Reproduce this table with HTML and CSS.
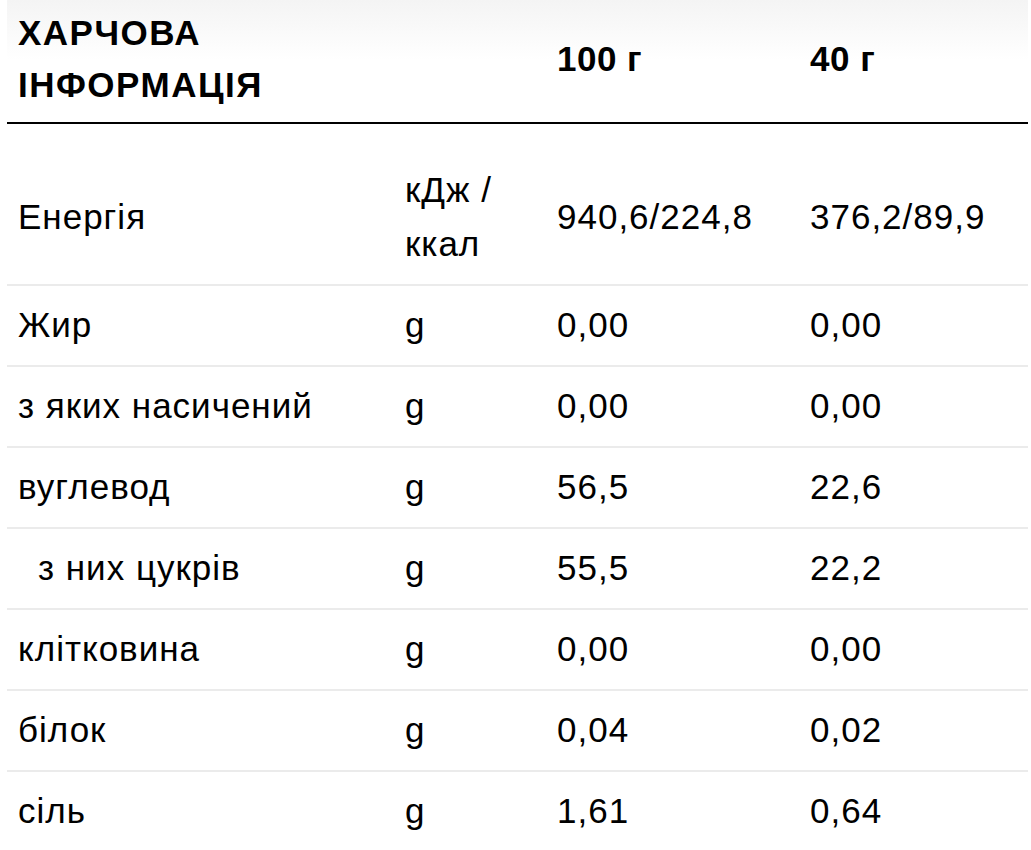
FILE: index.html
```html
<!DOCTYPE html>
<html lang="uk">
<head>
<meta charset="utf-8">
<title>Харчова інформація</title>
<link rel="stylesheet" href="styles.css">
</head>
<body>
<table class="nutrition">
  <colgroup>
    <col class="c-name">
    <col class="c-unit">
    <col class="c-100">
    <col class="c-40">
  </colgroup>
  <thead>
    <tr>
      <th>ХАРЧОВА<br>ІНФОРМАЦІЯ</th>
      <th></th>
      <th class="qty">100 г</th>
      <th class="qty">40 г</th>
    </tr>
  </thead>
  <tbody>
    <tr class="first">
      <td>Енергія</td>
      <td>кДж /<br>ккал</td>
      <td>940,6/224,8</td>
      <td>376,2/89,9</td>
    </tr>
    <tr><td>Жир</td><td>g</td><td>0,00</td><td>0,00</td></tr>
    <tr><td>з яких насичений</td><td>g</td><td>0,00</td><td>0,00</td></tr>
    <tr><td>вуглевод</td><td>g</td><td>56,5</td><td>22,6</td></tr>
    <tr><td class="sub">з них цукрів</td><td>g</td><td>55,5</td><td>22,2</td></tr>
    <tr><td>клітковина</td><td>g</td><td>0,00</td><td>0,00</td></tr>
    <tr><td>білок</td><td>g</td><td>0,04</td><td>0,02</td></tr>
    <tr><td>сіль</td><td>g</td><td>1,61</td><td>0,64</td></tr>
  </tbody>
</table>
</body>
</html>
```
FILE: styles.css
```css
html {
  background: #fff;
}
body {
  margin: 0 3px 0 7px;
  background: linear-gradient(#f4f4f4, #ffffff 60px) no-repeat;
  font-family: "Liberation Sans", Arial, sans-serif;
  color: #000;
}
.nutrition {
  width: 100%;
  border-collapse: collapse;
  font-size: 35px;
  letter-spacing: 1px;
}
.c-name { width: 387px; }
.c-unit { width: 152px; }
.c-100 { width: 253px; }
.c-40 { width: auto; }

.nutrition th {
  text-align: left;
  font-weight: bold;
  line-height: 52px;
  padding: 7px 11px 11px;
  vertical-align: middle;
  border-bottom: 2px solid #000;
  letter-spacing: 1.5px;
}
.nutrition th.qty {
  letter-spacing: 0.5px;
}
.nutrition td {
  line-height: 54px;
  padding: 12px 11px 13px;
  vertical-align: middle;
  border-bottom: 2px solid #ebebeb;
}
.nutrition tr.first td {
  padding-top: 39px;
}
.nutrition td.sub {
  padding-left: 31px;
}
```
